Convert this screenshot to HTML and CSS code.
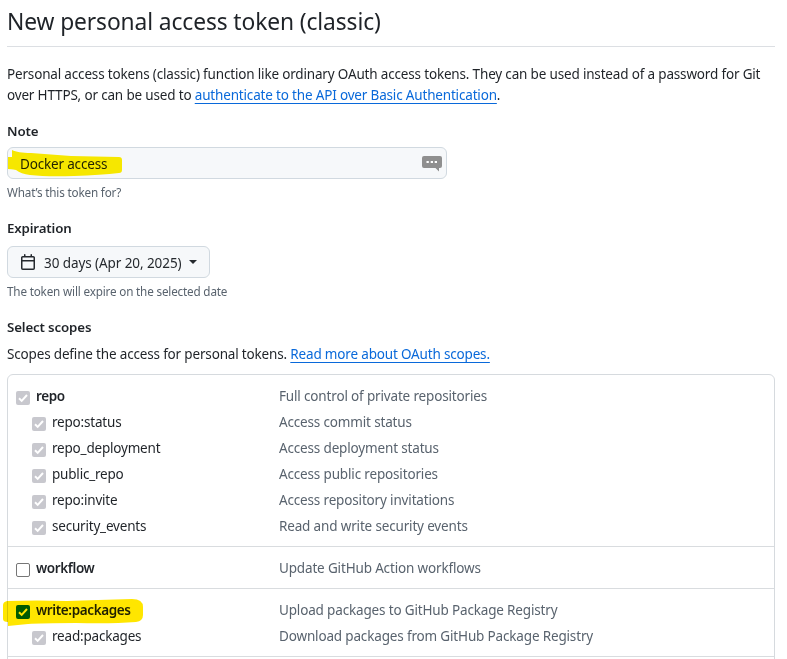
FILE: index.html
```html
<!DOCTYPE html>
<html lang="en">
<head>
<meta charset="utf-8">
<title>New personal access token (classic)</title>
<link rel="stylesheet" href="styles.css">
</head>
<body>
<main class="page">
  <h1 class="title">New personal access token (classic)</h1>
  <p class="intro">Personal access tokens (classic) function like ordinary OAuth access tokens. They can be used instead of a password for Git<br>over HTTPS, or can be used to <a class="link">authenticate to the API over Basic Authentication</a>.</p>

  <section class="field">
    <h2 class="label">Note</h2>
    <div class="input">
      <span class="input-value">Docker access</span>
      <svg class="manager" width="22" height="17" viewBox="0 0 22 17"><path fill="#8f8f8f" d="M3 1h16q2 0 2 2v8q0 2-2 2h-1v3.500L14.500 13H3q-2 0-2-2V3q0-2 2-2z"/><path fill="#fff" d="M5.500 6h2.300v2H5.500zM9.700 6H12v2H9.700zM13.700 6H16v2h-2.300z"/></svg>
      <svg class="marker marker-note" width="116" height="30" viewBox="0 0 116 30"><path fill="#ffee00" d="M5 1C9 3 15 4 24 4l40 3 48 1q3 0 3 3v10q0 3-3 3-18 2-45 3-27 1-44-1-9-1-14-5Q3 20 1 20V8h4z"/></svg>
    </div>
    <p class="caption">What’s this token for?</p>
  </section>

  <section class="field">
    <h2 class="label">Expiration</h2>
    <button class="picker" type="button">
      <svg width="16" height="16" viewBox="0 0 16 16" fill="#25292e"><path d="M4.750 0a.75.75 0 0 1 .75.75V2h5V.75a.75.75 0 0 1 1.500 0V2h1.250c.966 0 1.750.784 1.750 1.750v10.500A1.750 1.750 0 0 1 13.250 16H2.750A1.750 1.750 0 0 1 1 14.250V3.750C1 2.784 1.784 2 2.750 2H4V.75A.75.75 0 0 1 4.750 0ZM2.500 7.500v6.750c0 .138.112.25.25.25h10.500a.25.25 0 0 0 .25-.25V7.500Zm10.750-4H2.750a.25.25 0 0 0-.25.25V6h11V3.750a.25.25 0 0 0-.25-.25Z"/></svg>
      <span class="picker-text">30 days (Apr 20, 2025)</span>
      <span class="caret"></span>
    </button>
    <p class="caption">The token will expire on the selected date</p>
  </section>

  <section>
    <h2 class="label">Select scopes</h2>
    <p class="scope-intro">Scopes define the access for personal tokens. <a class="link">Read more about OAuth scopes.</a></p>
    <div class="scopes">
      <div class="group">
        <div class="row"><span class="check off"><svg viewBox="0 0 14 14"><path d="M3 7.200l2.700 2.700L11 4"/></svg></span><b class="name">repo</b><span class="desc">Full control of private repositories</span></div>
        <div class="row child"><span class="check off"><svg viewBox="0 0 14 14"><path d="M3 7.200l2.700 2.700L11 4"/></svg></span><span class="name">repo:status</span><span class="desc">Access commit status</span></div>
        <div class="row child"><span class="check off"><svg viewBox="0 0 14 14"><path d="M3 7.200l2.700 2.700L11 4"/></svg></span><span class="name">repo_deployment</span><span class="desc">Access deployment status</span></div>
        <div class="row child"><span class="check off"><svg viewBox="0 0 14 14"><path d="M3 7.200l2.700 2.700L11 4"/></svg></span><span class="name">public_repo</span><span class="desc">Access public repositories</span></div>
        <div class="row child"><span class="check off"><svg viewBox="0 0 14 14"><path d="M3 7.200l2.700 2.700L11 4"/></svg></span><span class="name">repo:invite</span><span class="desc">Access repository invitations</span></div>
        <div class="row child"><span class="check off"><svg viewBox="0 0 14 14"><path d="M3 7.200l2.700 2.700L11 4"/></svg></span><span class="name">security_events</span><span class="desc">Read and write security events</span></div>
      </div>
      <div class="group">
        <div class="row"><span class="check empty"></span><b class="name">workflow</b><span class="desc">Update GitHub Action workflows</span></div>
      </div>
      <div class="group">
        <div class="row"><span class="check on"><svg viewBox="0 0 14 14"><path d="M3 7.200l2.700 2.700L11 4"/></svg></span><b class="name">write:packages</b><span class="desc">Upload packages to GitHub Package Registry</span>
          <svg class="marker marker-packages" width="144" height="30" viewBox="0 0 144 30"><path fill="#ffe600" d="M6 3q30-1 60 0 30-1 65-2 11 0 11 8v8q0 6-7 7-25 2-60 1-35 0-48 1l-20 2H7v-4q-5 0-5-3V7q0-3 4-4z"/></svg>
        </div>
        <div class="row child"><span class="check off"><svg viewBox="0 0 14 14"><path d="M3 7.200l2.700 2.700L11 4"/></svg></span><span class="name">read:packages</span><span class="desc">Download packages from GitHub Package Registry</span></div>
      </div>
      <div class="group"></div>
    </div>
  </section>
</main>
</body>
</html>
```
FILE: styles.css
```css
* { box-sizing: border-box; }
html { height: 659px; overflow: hidden; background: #fff; }
body {
  margin: 0;
  height: 659px;
  overflow: hidden;
  background: #fff;
  color: #1f2328;
  font: 13.5px/21px "Noto Sans", "Open Sans", sans-serif;
  letter-spacing: -0.17px;
}
h1, h2, p { margin: 0; }
.page { width: 768px; margin-left: 7px; white-space: nowrap; }
.title {
  height: 47px;
  padding-top: 4px;
  border-bottom: 1px solid #dcdfe3;
  font-size: 22.8px;
  letter-spacing: -0.11px;
  font-weight: 400;
  line-height: 35px;
}
.intro { margin-top: 17px; }
.link { color: #0969da; text-decoration: underline; text-underline-offset: 3px; text-decoration-thickness: 1px; }
.label { font-size: 13.3px; font-weight: 600; line-height: 21px; letter-spacing: -0.15px; }
.field:first-of-type { margin-top: 15px; }
.field { height: 97px; }
.field + .field { height: 99px; }
.input {
  position: relative;
  display: flex;
  align-items: center;
  justify-content: space-between;
  width: 440px;
  height: 32px;
  margin-top: 5px;
  padding: 1px 3px 0 12px;
  border: 1px solid #d1d9e0;
  border-radius: 6px;
  background: #f6f8fa;
}
.input-value { padding-top: 2px; }
.marker { position: absolute; mix-blend-mode: multiply; }
.marker-note { left: -1px; top: 1px; }
.marker-packages { left: -15px; top: 1px; }
.caption { color: #59636e; font-size: 11.7px; letter-spacing: -0.17px; line-height: 18px; margin-top: 4px; }
.picker {
  display: flex;
  align-items: center;
  width: 203px;
  height: 32px;
  margin-top: 7px;
  padding: 0 12px;
  border: 1px solid #d1d9e0;
  border-radius: 6px;
  background: #f6f8fa;
  color: #25292e;
  font: inherit;
  letter-spacing: -0.08px;
}
.picker-text { margin-left: 8px; padding-top: 2px; width: 138px; text-align: left; }
.caret { margin-left: 7px; border: 4px solid transparent; border-top-color: #25292e; border-bottom: 0; }
.scope-intro { margin-top: 6px; }
.scopes { height: 300px; margin-top: 9px; border: 1px solid #d6dade; border-radius: 6px; }
.group { padding: 8px 8px 7px; }
.group + .group { border-top: 1px solid #d9dcdf; }
.row { position: relative; display: grid; grid-template-columns: 20px 243px 1fr; height: 26px; line-height: 26px; }
.child { grid-template-columns: 20px 227px 1fr; margin-left: 16px; }
.name { font-weight: 400; letter-spacing: -0.2px; }
b.name { font-weight: 600; letter-spacing: -0.38px; }
.desc { color: #59636e; letter-spacing: -0.16px; }
.check { width: 14px; height: 14px; margin-top: 8px; border-radius: 2px; line-height: 0; }
.check svg { width: 14px; height: 14px; fill: none; stroke: #fff; stroke-width: 2; }
.off { background: #c8c8ce; }
.on { background: #006400; }
.empty { border: 1px solid #767676; background: #fff; }
```
